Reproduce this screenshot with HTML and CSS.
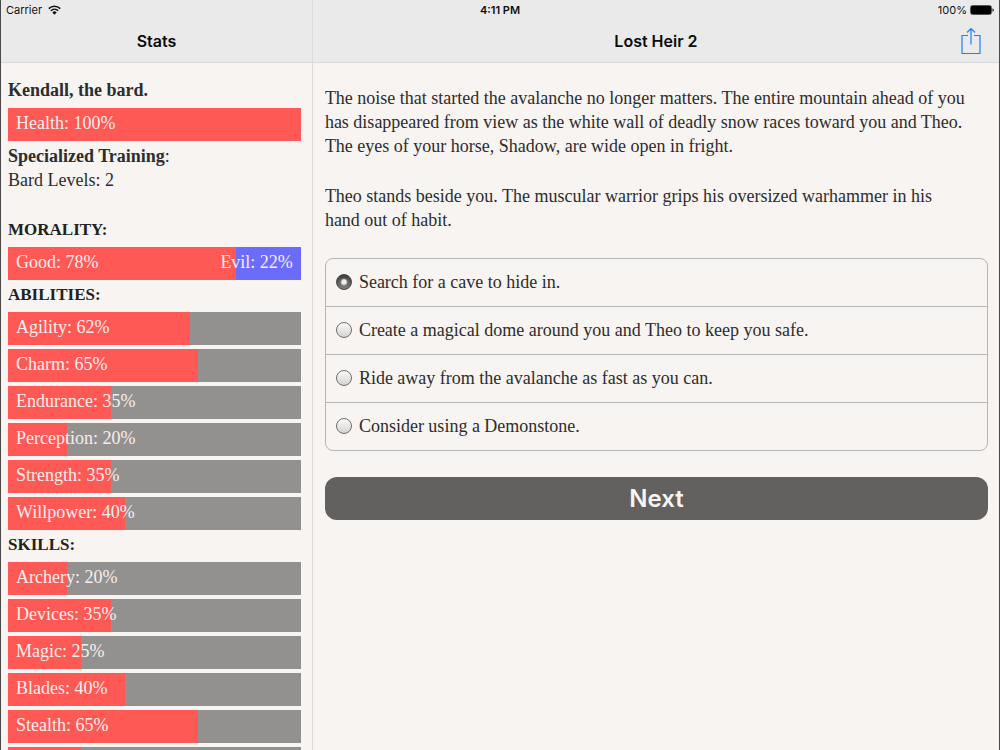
FILE: index.html
```html
<!DOCTYPE html>
<html lang="en">
<head>
    <meta charset="UTF-8">
    <meta name="viewport" content="width=device-width, initial-scale=1.0">
    <title>Lost Heir 2</title>
    <link rel="stylesheet" href="styles.css">
</head>
<body>

<div class="app">
    <div class="status-bar">
        <div class="carrier">
            <span>Carrier</span>
            <svg width="13" height="10" viewBox="0 0 12 9">
                <path d="M0.7 3.2a7.6 7.6 0 0 1 10.6 0M2.6 5.2a4.9 4.9 0 0 1 6.8 0" fill="none" stroke="#111" stroke-width="1.4"/>
                <path d="M4 6.7a2.9 2.9 0 0 1 4 0L6 8.8z" fill="#111"/>
            </svg>
        </div>
        <div class="clock">4:11 PM</div>
        <div class="battery">
            <span>100%</span>
            <svg width="24" height="10" viewBox="0 0 24 10">
                <rect x="0.5" y="0.5" width="21" height="9" rx="2" fill="none" stroke="#555"/>
                <rect x="1" y="1" width="20" height="8" rx="1" fill="#000"/>
                <path d="M22.5 3.2q1.3 0.4 1.3 1.8t-1.3 1.8z" fill="#111"/>
            </svg>
        </div>
    </div>

    <aside class="sidebar">
        <header class="navbar">
            <h1>Stats</h1>
        </header>
        <div class="stats">
            <p class="name"><b>Kendall, the bard.</b></p>
            <div class="bar"><div class="fill" style="width: 100%"></div><span>Health: 100%</span></div>

            <p><b>Specialized Training</b>:</p>
            <p class="levels">Bard Levels: 2</p>

            <h2>MORALITY:</h2>
            <div class="bar opposed"><div class="fill" style="width: 78%"></div><span>Good: 78%</span><span>Evil: 22%</span></div>

            <h2>ABILITIES:</h2>
            <div class="bar"><div class="fill" style="width: 62%"></div><span>Agility: 62%</span></div>
            <div class="bar"><div class="fill" style="width: 65%"></div><span>Charm: 65%</span></div>
            <div class="bar"><div class="fill" style="width: 35%"></div><span>Endurance: 35%</span></div>
            <div class="bar"><div class="fill" style="width: 20%"></div><span>Perception: 20%</span></div>
            <div class="bar"><div class="fill" style="width: 35%"></div><span>Strength: 35%</span></div>
            <div class="bar"><div class="fill" style="width: 40%"></div><span>Willpower: 40%</span></div>

            <h2>SKILLS:</h2>
            <div class="bar"><div class="fill" style="width: 20%"></div><span>Archery: 20%</span></div>
            <div class="bar"><div class="fill" style="width: 35%"></div><span>Devices: 35%</span></div>
            <div class="bar"><div class="fill" style="width: 25%"></div><span>Magic: 25%</span></div>
            <div class="bar"><div class="fill" style="width: 40%"></div><span>Blades: 40%</span></div>
            <div class="bar"><div class="fill" style="width: 65%"></div><span>Stealth: 65%</span></div>
            <div class="bar"><div class="fill" style="width: 25%"></div></div>
        </div>
    </aside>

    <main class="story">
        <header class="navbar">
            <h1>Lost Heir 2</h1>
            <button class="share" type="button" aria-label="Share">
                <svg width="20" height="28" viewBox="0 0 20 28" fill="none" stroke="#1a82fb" stroke-width="1.2">
                    <path d="M7 8.5H1v18h18v-18h-6M10 17.5V1.5M6 5.5l4-4 4 4"/>
                </svg>
            </button>
        </header>
        <form class="scene">
            <p>The noise that started the avalanche no longer matters. The entire mountain ahead of you has disappeared from view as the white wall of deadly snow races toward you and Theo. The eyes of your horse, Shadow, are wide open in fright.</p>
            <p>Theo stands beside you. The muscular warrior grips his oversized warhammer in his hand out of habit.</p>

            <div class="choices">
                <label><input type="radio" name="choice" checked> Search for a cave to hide in.</label>
                <label><input type="radio" name="choice"> Create a magical dome around you and Theo to keep you safe.</label>
                <label><input type="radio" name="choice"> Ride away from the avalanche as fast as you can.</label>
                <label><input type="radio" name="choice"> Consider using a Demonstone.</label>
            </div>

            <button class="next" type="button">Next</button>
        </form>
    </main>
</div>

</body>
</html>
```
FILE: styles.css
```css
* {
    box-sizing: border-box;
}
body {
    margin: 0;
    background-color: #f7f4f1;
    color: #2d2d2d;
    font-family: "Liberation Serif", serif;
    font-size: 18px;
    line-height: 24px;
}
h1, h2, p {
    margin: 0;
}
.app {
    position: relative;
    display: grid;
    grid-template-columns: 5fr 11fr;
    height: 100vh;
    overflow: hidden;
    border-left: 1px solid #48484a;
    border-right: 1px solid #48484a;
}

/* status bar lies over both navigation bars */
.status-bar {
    position: absolute;
    z-index: 1;
    top: 0;
    left: 0;
    right: 0;
    display: grid;
    grid-template-columns: 1fr auto 1fr;
    padding: 0 5px;
    align-items: center;
    color: #111;
    font-family: Inter, sans-serif;
    font-size: 11px;
    line-height: 20px;
}
.carrier, .battery {
    display: flex;
    align-items: center;
    gap: 6px;
}
.battery {
    justify-content: flex-end;
    gap: 3px;
}
.clock {
    font-weight: 600;
}

.navbar {
    display: flex;
    align-items: center;
    justify-content: center;
    height: 63px;
    padding-top: 20px;
    background-color: #eaeaeb;
    border-bottom: 1px solid #dadada;
}
.navbar h1 {
    color: #0a0a0a;
    font-family: Inter, sans-serif;
    font-size: 16px;
    font-weight: 600;
}
.sidebar {
    min-width: 0;
    border-right: 1px solid #dcdada;
}
.stats {
    padding: 15px 11px 0 7px;
}
.stats h2 {
    margin: 3px 0 5px;
    color: #222;
    font-size: 17px;
    line-height: 24px;
}
.name {
    margin-bottom: 6px;
}
.levels {
    margin-bottom: 26px;
}
.bar {
    position: relative;
    display: flex;
    justify-content: space-between;
    height: 33px;
    margin-bottom: 4px;
    padding: 3px 8px;
    background-color: #929190;
    color: #f7eeec;
}
.bar:has(+ h2), .bar:has(+ p) {
    margin-bottom: 3px;
}
.bar span {
    position: relative;
}
.opposed {
    background-color: #6c6cfc;
}
.fill {
    position: absolute;
    top: 0;
    bottom: 0;
    left: 0;
    background-color: #ff5955;
}

.story {
    min-width: 0;
}
.story .navbar {
    position: relative;
}
.share {
    position: absolute;
    right: 18px;
    bottom: 7px;
    height: 28px;
    padding: 0;
    background: none;
    border: none;
    cursor: pointer;
}
.share svg {
    display: block;
}
.scene {
    padding: 23px 11px 0 12px;
}
.scene p {
    margin-bottom: 26px;
    padding-right: 18px;
}
.choices {
    border: 1px solid #b4b6b8;
    border-radius: 8px;
}
.choices label {
    display: flex;
    align-items: center;
    gap: 7px;
    height: 47px;
    padding: 0 10px 2px;
    cursor: pointer;
}
.choices label + label {
    height: 48px;
    border-top: 1px solid #b4b6b8;
}
.choices input {
    appearance: none;
    width: 16px;
    height: 16px;
    margin: 0;
    border: 1px solid #6e6e6e;
    border-radius: 50%;
    background: linear-gradient(#fafafa, #d4d4d4);
}
.choices input:checked {
    border-color: #444;
    background: radial-gradient(circle, #eee 2px, transparent 4px), linear-gradient(#3c3c3c, #808080);
}
.next {
    display: block;
    width: 100%;
    height: 43px;
    margin-top: 26px;
    padding: 0;
    background-color: #62615f;
    border: none;
    border-radius: 12px;
    color: #f7f4f1;
    font-family: Inter, sans-serif;
    font-size: 24px;
    font-weight: 600;
    cursor: pointer;
}
```
